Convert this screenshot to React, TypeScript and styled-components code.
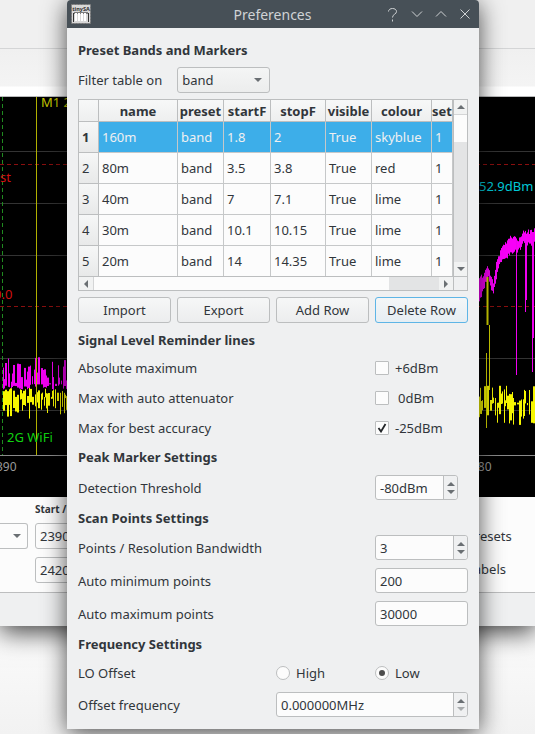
import React from "react";
import styled, { createGlobalStyle } from "styled-components";

const Global = createGlobalStyle`
  html, body { margin: 0; padding: 0; background: #f6f6f6; }
  body { width: 535px; height: 734px; overflow: hidden; font-family: "Noto Sans", sans-serif; font-size: 13px; color: #31363b; }
  * { box-sizing: border-box; }
`;

const Page = styled.div`
  position: relative;
  width: 535px;
  height: 734px;
  overflow: hidden;
  background: linear-gradient(180deg, #fff 0, #fafafa 640px, #f2f2f2 734px);
`;
const Back = styled.div`
  display: flex;
  flex-direction: column;
  height: 626px;
  background: #eff0f1;
  box-shadow: 0 6px 24px rgba(0, 0, 0, 0.75);
`;
const BackTop = styled.div`
  height: 49px;
  border-bottom: 1px solid #d4d5d6;
  background: #f0f0f0;
`;
const BackBar = styled.div`
  height: 48px;
  border-bottom: 1px solid #b9babb;
  background: linear-gradient(180deg, #f0f0f0 0, #f4f4f4 37px, #fff 38px);
`;
const Chart = styled.svg`
  display: block;
  width: 535px;
  height: 400px;
  flex: none;
`;
const Controls = styled.div`
  flex: 1;
  display: flex;
  flex-direction: column;
  background: #fdfdfd;
`;
const ControlsBody = styled.div`
  height: 96px;
  flex: none;
  border-bottom: 1px solid #bdbebf;
  display: grid;
  grid-template-columns: 28px 90px 1fr 80px;
  grid-template-rows: 23px 34px 33px;
  column-gap: 7px;
  padding-top: 3px;
  background: #fcfcfc;
`;
const BackFooter = styled.div`
  flex: 1;
  background: #eff0f1;
`;
const SmallBold = styled.div`
  grid-column: 2;
  grid-row: 1;
  font-size: 10px;
  font-weight: 700;
  padding-top: 2px;
`;
const BackCombo = styled.div`
  grid-column: 1;
  grid-row: 2;
  height: 26px;
  border: 1px solid #bcbebf;
  border-left: none;
  border-radius: 0 3px 3px 0;
  display: flex;
  align-items: center;
  justify-content: flex-end;
  padding-right: 6px;
`;
const BackInput = styled.div<{ $row: number }>`
  grid-column: 2;
  grid-row: ${(p) => p.$row};
  height: 26px;
  border: 1px solid #bcbebf;
  border-radius: 3px;
  padding: 0 4px;
  line-height: 24px;
  background: #fcfcfc;
  width: 60px;
`;
const BackLabel = styled.div<{ $row: number }>`
  grid-column: 4;
  grid-row: ${(p) => p.$row};
  height: 26px;
  line-height: ${(p) => (p.$row === 3 ? 24 : 26)}px;
  padding-left: 12px;
  white-space: nowrap;
`;

const Dialog = styled.div`
  position: absolute;
  left: 67px;
  top: 0;
  width: 412px;
  height: 729px;
  background: #eff0f1;
  border-radius: 4px 4px 0 0;
  box-shadow: 0 4px 24px rgba(0, 0, 0, 0.7);
  display: flex;
  flex-direction: column;
`;
const TitleBar = styled.div`
  height: 28px;
  flex: none;
  background: #475057;
  border-radius: 4px 4px 0 0;
  display: flex;
  align-items: center;
  color: #d0d3d5;
  padding: 0 8px 0 4px;
`;
const Logo = styled.svg`
  width: 20px;
  height: 20px;
  flex: none;
`;
const TitleText = styled.div`
  flex: 1;
  text-align: center;
  font-size: 14px;
  padding-left: 68px;
`;
const TitleButtons = styled.div`
  display: flex;
  gap: 12px;
  align-items: center;
`;
const TitleIcon = styled.svg<{ $tall?: boolean }>`
  width: ${(p) => (p.$tall ? 13 : 12)}px;
  height: ${(p) => (p.$tall ? 15 : 12)}px;
  display: block;
  stroke: #cfd2d4;
  stroke-width: 1;
  fill: none;
`;
const Body = styled.div`
  flex: 1;
  display: flex;
  flex-direction: column;
  padding: 0 11px;
`;
const Heading = styled.div<{ $top: number }>`
  font-weight: 700;
  font-size: 13px;
  height: 18px;
  line-height: 18px;
  margin-top: ${(p) => p.$top}px;
  color: #31363b;
`;
const FilterRow = styled.div`
  display: flex;
  align-items: center;
  height: 26px;
  margin-top: 8px;
  gap: 15px;
`;
const Combo = styled.div`
  width: 93px;
  height: 26px;
  border: 1px solid #bcbebf;
  border-radius: 3px;
  background: linear-gradient(180deg, #f4f5f5, #eceded);
  display: flex;
  align-items: center;
  justify-content: space-between;
  padding: 0 7px 0 4px;
`;
const Caret = styled.span<{ $c?: string }>`
  width: 0;
  height: 0;
  border-left: 4px solid transparent;
  border-right: 4px solid transparent;
  border-top: 4px solid ${(p) => p.$c ?? "#6a6f73"};
`;
const Table = styled.div`
  margin-top: 6px;
  width: 390px;
  height: 192px;
  border: 1px solid #bcbebf;
  display: grid;
  grid-template-columns: 374px 14px;
  grid-template-rows: 176px 14px;
  background: #fcfcfc;
`;
const Cells = styled.div`
  overflow: hidden;
  display: grid;
  grid-template-columns: 20px 79px 46px 47px 55px 46px 60px 21px;
  grid-template-rows: 22px repeat(5, 31px);
`;
const Head = styled.div`
  font-weight: 700;
  text-align: center;
  line-height: 22px;
  background: linear-gradient(180deg, #f7f8f8, #eeefef);
  border-right: 1px solid #bcbebf;
  border-bottom: 1px solid #bcbebf;
  white-space: nowrap;
  overflow: hidden;
`;
const RowHead = styled.div<{ $on?: boolean }>`
  font-weight: ${(p) => (p.$on ? 700 : 400)};
  padding: 6px 0 0 3px;
  background: linear-gradient(180deg, #f6f7f7, #e8e9e9);
  border-right: 1px solid #bcbebf;
  border-bottom: 1px solid #bcbebf;
`;
const Cell = styled.div<{ $on?: boolean }>`
  line-height: 30px;
  padding-left: 3px;
  white-space: nowrap;
  overflow: hidden;
  border-right: 1px solid #c6c8c9;
  border-bottom: 1px solid #c6c8c9;
  background: ${(p) => (p.$on ? "#3daee9" : "#fcfcfc")};
  color: ${(p) => (p.$on ? "#eff0f1" : "#31363b")};
`;
const VScroll = styled.div`
  border-left: 1px solid #bcbebf;
  background: #e3e4e5;
  display: flex;
  flex-direction: column;
`;
const ScrollEnd = styled.div`
  height: 14px;
  flex: none;
  background: #f1f2f2;
  display: flex;
  align-items: center;
  justify-content: center;
`;
const VThumb = styled.div`
  height: 28px;
  background: #fcfcfc;
  border-top: 1px solid #d4d5d6;
`;
const Grow = styled.div`
  flex: 1;
`;
const HScroll = styled.div`
  grid-column: 1;
  border-top: 1px solid #bcbebf;
  background: #e3e4e5;
  display: flex;
`;
const HEnd = styled.div`
  width: 14px;
  background: #f1f2f2;
  display: flex;
  align-items: center;
  justify-content: center;
`;
const HThumb = styled.div`
  width: 296px;
  background: #fcfcfc;
  border-left: 1px solid #d4d5d6;
`;
const Corner = styled.div`
  border-top: 1px solid #bcbebf;
  border-left: 1px solid #bcbebf;
  background: #eff0f1;
`;
const TriUp = styled.span`
  width: 0;
  height: 0;
  border-left: 4px solid transparent;
  border-right: 4px solid transparent;
  border-bottom: 4px solid #6a6f73;
`;
const TriLeft = styled.span`
  width: 0;
  height: 0;
  border-top: 4px solid transparent;
  border-bottom: 4px solid transparent;
  border-right: 4px solid #6a6f73;
`;
const TriRight = styled.span`
  width: 0;
  height: 0;
  border-top: 4px solid transparent;
  border-bottom: 4px solid transparent;
  border-left: 4px solid #6a6f73;
`;
const Buttons = styled.div`
  display: grid;
  grid-template-columns: repeat(4, 93px);
  column-gap: 6px;
  margin-top: 6px;
`;
const Button = styled.div<{ $focus?: boolean }>`
  height: 26px;
  line-height: 25px;
  text-align: center;
  border: 1px solid ${(p) => (p.$focus ? "#5eb5e6" : "#bcbebf")};
  border-radius: 3px;
  background: ${(p) =>
    p.$focus ? "linear-gradient(180deg,#f4f6f7,#e6eef3)" : "linear-gradient(180deg,#f6f7f7,#ecedee)"};
`;
const Row = styled.div<{ $h: number; $top?: number }>`
  display: grid;
  grid-template-columns: 297px 1fr;
  align-items: center;
  height: ${(p) => p.$h}px;
  margin-top: ${(p) => p.$top ?? 0}px;
`;
const Check = styled.div`
  display: flex;
  align-items: center;
  gap: 6px;
`;
const ZeroLabel = styled.span`
  margin-left: 3px;
`;
const Box = styled.div`
  width: 14px;
  height: 14px;
  border: 1px solid #bcbebf;
  background: #fcfcfc;
  border-radius: 1px;
  display: flex;
  align-items: center;
  justify-content: center;
`;
const Spin = styled.div<{ $w: number }>`
  width: ${(p) => p.$w}px;
  height: 25px;
  border: 1px solid #bcbebf;
  border-radius: 3px;
  background: #fcfcfc;
  display: flex;
  align-items: center;
  padding-left: 4px;
`;
const SpinText = styled.div`
  flex: 1;
`;
const SpinArrows = styled.div`
  width: 14px;
  height: 100%;
  border-left: 1px solid #bcbebf;
  background: #eff0f1;
  border-radius: 0 3px 3px 0;
  display: flex;
  flex-direction: column;
  align-items: center;
  justify-content: center;
  gap: 4px;
`;
const Radios = styled.div`
  display: grid;
  grid-template-columns: 99px 1fr;
`;
const RadioItem = styled.div`
  display: flex;
  align-items: center;
  gap: 6px;
`;
const Radio = styled.div<{ $on?: boolean }>`
  width: 14px;
  height: 14px;
  border-radius: 50%;
  border: 1px solid #bcbebf;
  background: #fcfcfc;
  display: flex;
  align-items: center;
  justify-content: center;
  &::after {
    content: "";
    width: 6px;
    height: 6px;
    border-radius: 50%;
    background: ${(p) => (p.$on ? "#4d4d4d" : "transparent")};
  }
`;
const FreqRow = styled.div`
  display: grid;
  grid-template-columns: 198px 1fr;
  align-items: center;
  height: 25px;
  margin-top: 7px;
`;

const rows = [
  ["160m", "band", "1.8", "2", "True", "skyblue", "1"],
  ["80m", "band", "3.5", "3.8", "True", "red", "1"],
  ["40m", "band", "7", "7.1", "True", "lime", "1"],
  ["30m", "band", "10.1", "10.15", "True", "lime", "1"],
  ["20m", "band", "14", "14.35", "True", "lime", "1"],
];
const headers = ["", "name", "preset", "startF", "stopF", "visible", "colour", "set"];

function rng(seed: number) {
  let s = seed;
  return () => {
    s = (s * 9301 + 49297) % 233280;
    return s / 233280;
  };
}

function spiky(seed: number, top: number, mid: number, bottom: number, x0: number, x1: number) {
  const r = rng(seed);
  let d = "";
  let x = x0;
  while (x <= x1) {
    const a = mid - (mid - top) * Math.pow(r(), 1.15);
    const b = mid + (bottom - mid) * Math.pow(r(), 1.15);
    const w = r() > 0.6 ? 2 : 1;
    for (let i = 0; i < w; i++) d += `M${x + i}.5 ${a.toFixed(1)}V${b.toFixed(1)}`;
    x += w + (r() > 0.75 ? 1 : 0);
  }
  return d;
}

function rightMagenta() {
  const pts: [number, number, number][] = [
    [479, 280, 303], [485, 270, 283], [488, 267, 275], [490, 275, 285], [493, 283, 292], [496, 263, 277],
    [500, 250, 260], [505, 243, 257], [511, 235, 253], [518, 240, 250], [523, 232, 243], [535, 230, 243],
  ];
  const r = rng(71);
  let d = "";
  for (let x = 479; x < 535; x++) {
    let i = 0;
    while (i < pts.length - 2 && pts[i + 1][0] < x) i++;
    const [a, b] = [pts[i], pts[i + 1]];
    const t = (x - a[0]) / (b[0] - a[0]);
    const top = a[1] + (b[1] - a[1]) * t;
    const bot = a[2] + (b[2] - a[2]) * t;
    d += `M${x}.5 ${(top + r() * 5 - 2).toFixed(1)}V${(bot + r() * 5 - 2).toFixed(1)}`;
  }
  return d;
}

export default function App() {
  return (
    <Page>
      <Global />
      <Back>
        <BackTop />
        <BackBar />
        <Chart viewBox="0 97 535 400">
          <rect x="0" y="97" width="535" height="400" fill="#000" />
          <path d="M0 151.5H535M0 203.5H535M0 255.5H535M0 358.5H535M0 410.5H535" stroke="#333" />
          <path d="M0 455.5H535" stroke="#8a8a8a" />
          <path d="M2.5 97V455" stroke="#1f8a1f" strokeDasharray="4 3" />
          <path d="M0 164.5H535M0 306.5H535" stroke="#8a0f0f" strokeDasharray="4 3" />
          <path d={spiky(11, 357, 384, 390, 3, 67)} stroke="#f000f0" fill="none" />
          <path d={spiky(37, 388, 397, 420, 3, 67)} stroke="#f6f600" fill="none" />
          <path d={rightMagenta()} stroke="#f800f8" fill="none" />
          <path d="M516.5 240V375M532.5 232V372M533.5 232V338M525.5 240V312M526.5 240V300" stroke="#f000f0" fill="none" />
          <path d={spiky(55, 385, 403, 425, 479, 535)} stroke="#f6f600" fill="none" />
          <path d="M36.5 97V455" stroke="#b0b000" />
          <path d="M487.5 277V325" stroke="#d8d800" strokeWidth="2" />
          <path d="M489.5 325V390M486.5 353V428" stroke="#d8d800" />
          <text x="41" y="107" fill="#c8c800" fontSize="13" fontFamily="Noto Sans">M1 2</text>
          <text x="0" y="182" fill="#d01010" fontSize="13" fontFamily="Noto Sans">st</text>
          <text x="-6" y="299" fill="#d01010" fontSize="13" fontFamily="Noto Sans">0.0</text>
          <text x="7" y="442" fill="#10d010" fontSize="13" fontFamily="Noto Sans">2G WiFi</text>
          <text x="-4" y="471" fill="#9a9a9a" fontSize="12" fontFamily="Noto Sans">390</text>
          <text x="471" y="471" fill="#9a9a9a" fontSize="12" fontFamily="Noto Sans">480</text>
          <text x="479" y="191" fill="#00c8d8" fontSize="13" fontFamily="Noto Sans">52.9dBm</text>
        </Chart>
        <Controls>
          <ControlsBody>
            <SmallBold>Start /</SmallBold>
            <BackCombo><Caret /></BackCombo>
            <BackInput $row={2}>2390</BackInput>
            <BackInput $row={3}>2420</BackInput>
            <BackLabel $row={2}>Presets</BackLabel>
            <BackLabel $row={3}>Labels</BackLabel>
          </ControlsBody>
          <BackFooter />
        </Controls>
      </Back>

      <Dialog>
        <TitleBar>
          <Logo viewBox="0 0 20 20">
            <rect x="0.5" y="0.5" width="19" height="19" fill="#d8d8d8" stroke="#777" strokeDasharray="2 1" />
            <text x="10" y="7" textAnchor="middle" fontSize="5.5" fontWeight="700" fill="#333" fontFamily="Noto Sans">tinySA</text>
            <path d="M3 9H17" stroke="#222" />
            <path d="M5 9V17M8 9V17M11 9V17M14 9V17" stroke="#fff" strokeWidth="2" />
            <path d="M2.5 9V18M17.5 9V18" stroke="#333" />
          </Logo>
          <TitleText>Preferences</TitleText>
          <TitleButtons>
            <TitleIcon $tall viewBox="0 0 13 15">
              <path d="M2.5 4.5C2.5 0.5 10.5 0.5 10.5 4.5C10.5 7.5 6.5 7 6.5 10.5M6.5 12.5V14.5" />
            </TitleIcon>
            <TitleIcon viewBox="0 0 12 12"><path d="M1 3.5L6 8.5L11 3.5" /></TitleIcon>
            <TitleIcon viewBox="0 0 12 12"><path d="M1 8.5L6 3.5L11 8.5" /></TitleIcon>
            <TitleIcon viewBox="0 0 12 12"><path d="M1.5 1.5L10.5 10.5M10.5 1.5L1.5 10.5" /></TitleIcon>
          </TitleButtons>
        </TitleBar>
        <Body>
          <Heading $top={13}>Preset Bands and Markers</Heading>
          <FilterRow>
            <span>Filter table on</span>
            <Combo>band<Caret /></Combo>
          </FilterRow>
          <Table>
            <Cells>
              {headers.map((h, i) => <Head key={i}>{h}</Head>)}
              {rows.map((r, i) => (
                <React.Fragment key={i}>
                  <RowHead $on={i === 0}>{i + 1}</RowHead>
                  {r.map((c, j) => <Cell key={j} $on={i === 0}>{c}</Cell>)}
                </React.Fragment>
              ))}
            </Cells>
            <VScroll>
              <ScrollEnd><TriUp /></ScrollEnd>
              <VThumb />
              <Grow />
              <ScrollEnd><Caret /></ScrollEnd>
            </VScroll>
            <HScroll>
              <HEnd><TriLeft /></HEnd>
              <HThumb />
              <Grow />
              <HEnd><TriRight /></HEnd>
            </HScroll>
            <Corner />
          </Table>
          <Buttons>
            <Button>Import</Button>
            <Button>Export</Button>
            <Button>Add Row</Button>
            <Button $focus>Delete Row</Button>
          </Buttons>
          <Heading $top={8}>Signal Level Reminder lines</Heading>
          <Row $h={30} $top={4}>
            <span>Absolute maximum</span>
            <Check><Box />+6dBm</Check>
          </Row>
          <Row $h={30}>
            <span>Max with auto attenuator</span>
            <Check><Box /><ZeroLabel>0dBm</ZeroLabel></Check>
          </Row>
          <Row $h={30}>
            <span>Max for best accuracy</span>
            <Check>
              <Box>
                <svg width="10" height="10" viewBox="0 0 10 10"><path d="M1.5 5L4 8.5L8.5 1" fill="none" stroke="#232629" strokeWidth="1.8" /></svg>
              </Box>
              -25dBm
            </Check>
          </Row>
          <Heading $top={5}>Peak Marker Settings</Heading>
          <Row $h={25} $top={9}>
            <span>Detection Threshold</span>
            <Spin $w={83}><SpinText>-80dBm</SpinText><SpinArrows><TriUp /><Caret /></SpinArrows></Spin>
          </Row>
          <Heading $top={9}>Scan Points Settings</Heading>
          <Row $h={25} $top={8}>
            <span>Points / Resolution Bandwidth</span>
            <Spin $w={93}><SpinText>3</SpinText><SpinArrows><TriUp /><Caret /></SpinArrows></Spin>
          </Row>
          <Row $h={25} $top={8}>
            <span>Auto minimum points</span>
            <Spin $w={93}><SpinText>200</SpinText></Spin>
          </Row>
          <Row $h={25} $top={8}>
            <span>Auto maximum points</span>
            <Spin $w={93}><SpinText>30000</SpinText></Spin>
          </Row>
          <Heading $top={9}>Frequency Settings</Heading>
          <FreqRow>
            <span>LO Offset</span>
            <Radios>
              <RadioItem><Radio />High</RadioItem>
              <RadioItem><Radio $on />Low</RadioItem>
            </Radios>
          </FreqRow>
          <FreqRow>
            <span>Offset frequency</span>
            <Spin $w={192}><SpinText>0.000000MHz</SpinText><SpinArrows><TriUp /><Caret $c="#a8abad" /></SpinArrows></Spin>
          </FreqRow>
        </Body>
      </Dialog>
    </Page>
  );
}
